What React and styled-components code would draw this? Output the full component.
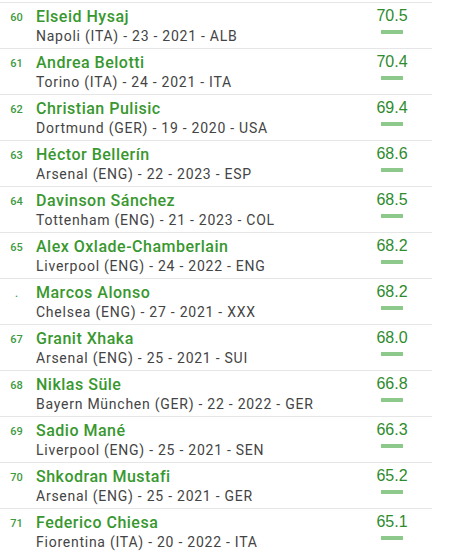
import React from "react";
import styled, { createGlobalStyle } from "styled-components";

const Global = createGlobalStyle`
  html, body { margin: 0; padding: 0; background: #fff; }
  body { font-family: Roboto, "Noto Sans", sans-serif; }
`;

const List = styled.div`
  width: 432px;
  padding-top: 2px;
`;

const Row = styled.div`
  display: flex;
  align-items: flex-start;
  height: 45px;
  border-top: 1px solid #e6e6e6;
  box-sizing: content-box;
`;

const Rank = styled.div`
  width: 33px;
  margin-right: 3px;
  text-align: center;
  font-family: Roboto, sans-serif;
  font-size: 11px;
  font-weight: 500;
  color: #3f9a3f;
  line-height: 16px;
  padding-top: 7px;
`;

const Info = styled.div`
  flex: 1;
  display: flex;
  flex-direction: column;
  padding-top: 3px;
`;

const Name = styled.div`
  font-family: Roboto, sans-serif;
  font-size: 16px;
  font-weight: 500;
  color: #38982f;
  line-height: 21px;
  letter-spacing: 0.5px;
`;

const Meta = styled.div`
  font-family: Roboto, sans-serif;
  font-size: 14px;
  color: #444;
  line-height: 18px;
  letter-spacing: 0.75px;
`;

const ScoreCol = styled.div`
  width: 48px;
  margin-right: 16px;
  display: flex;
  flex-direction: column;
  align-items: center;
  padding-top: 4px;
`;

const Score = styled.div`
  font-family: "Liberation Sans", Arial, sans-serif;
  font-size: 16px;
  color: #2e8b2e;
  line-height: 18px;
`;

const Bar = styled.div`
  margin-top: 5px;
  width: 22px;
  height: 4px;
  background: #8dc98a;
`;

const players = [
  ["60", "Elseid Hysaj", "Napoli (ITA) - 23 - 2021 - ALB", "70.5"],
  ["61", "Andrea Belotti", "Torino (ITA) - 24 - 2021 - ITA", "70.4"],
  ["62", "Christian Pulisic", "Dortmund (GER) - 19 - 2020 - USA", "69.4"],
  ["63", "Héctor Bellerín", "Arsenal (ENG) - 22 - 2023 - ESP", "68.6"],
  ["64", "Davinson Sánchez", "Tottenham (ENG) - 21 - 2023 - COL", "68.5"],
  ["65", "Alex Oxlade-Chamberlain", "Liverpool (ENG) - 24 - 2022 - ENG", "68.2"],
  [".", "Marcos Alonso", "Chelsea (ENG) - 27 - 2021 - XXX", "68.2"],
  ["67", "Granit Xhaka", "Arsenal (ENG) - 25 - 2021 - SUI", "68.0"],
  ["68", "Niklas Süle", "Bayern München (GER) - 22 - 2022 - GER", "66.8"],
  ["69", "Sadio Mané", "Liverpool (ENG) - 25 - 2021 - SEN", "66.3"],
  ["70", "Shkodran Mustafi", "Arsenal (ENG) - 25 - 2021 - GER", "65.2"],
  ["71", "Federico Chiesa", "Fiorentina (ITA) - 20 - 2022 - ITA", "65.1"],
];

export default function App() {
  return (
    <>
      <Global />
      <List>
        {players.map(([rank, name, meta, score]) => (
          <Row key={name}>
            <Rank>{rank}</Rank>
            <Info>
              <Name>{name}</Name>
              <Meta>{meta}</Meta>
            </Info>
            <ScoreCol>
              <Score>{score}</Score>
              <Bar />
            </ScoreCol>
          </Row>
        ))}
      </List>
    </>
  );
}
